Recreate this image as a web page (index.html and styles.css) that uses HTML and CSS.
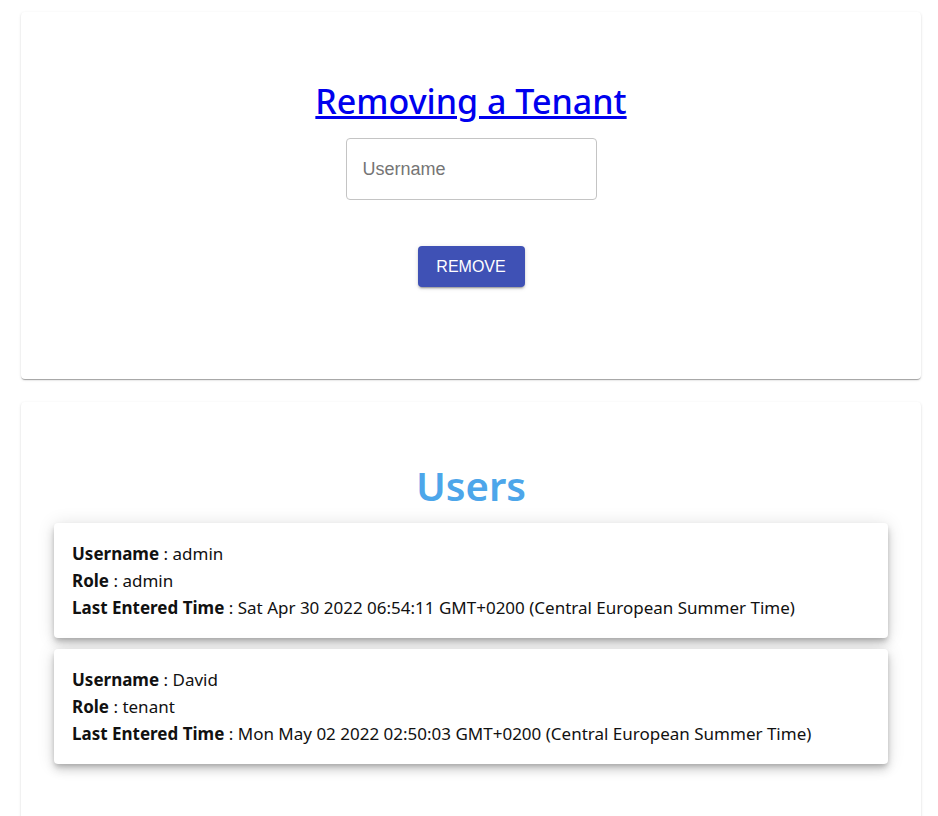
FILE: index.html
```html
<!DOCTYPE html>
<html>
<head>
<meta charset="utf-8">
<link rel="stylesheet" href="styles.css">
</head>
<body>
<div class="page">
  <section class="card remove-card">
    <h1 class="title"><a href="#">Removing a Tenant</a></h1>
    <div class="field"><input type="text" placeholder="Username"></div>
    <button class="btn">REMOVE</button>
  </section>
  <section class="card users-card">
    <h2 class="users-title">Users</h2>
    <div class="user">
      <div><b>Username</b> : admin</div>
      <div><b>Role</b> : admin</div>
      <div><b>Last Entered Time</b> : Sat Apr 30 2022 06:54:11 GMT+0200 (Central European Summer Time)</div>
    </div>
    <div class="user">
      <div><b>Username</b> : David</div>
      <div><b>Role</b> : tenant</div>
      <div><b>Last Entered Time</b> : Mon May 02 2022 02:50:03 GMT+0200 (Central European Summer Time)</div>
    </div>
  </section>
</div>
</body>
</html>
```
FILE: styles.css
```css
html, body { margin: 0; padding: 0; background: #fff; }
body { font-family: "Noto Sans", "Open Sans", sans-serif; color: #111; }
.page { width: 900px; margin-left: 21px; padding-top: 12px; display: flex; flex-direction: column; gap: 23px; }
.card { background: #fff; border-radius: 4px;
  box-shadow: 0 2px 1px -1px rgba(0,0,0,.2), 0 1px 1px 0 rgba(0,0,0,.14), 0 1px 3px 0 rgba(0,0,0,.12); }
.remove-card { height: 367px; display: flex; flex-direction: column; align-items: center; box-sizing: border-box; padding-top: 65px; }
.title { margin: 0; font-size: 34px; font-weight: 500; line-height: 48px; }
.title a { color: #0000ee; text-decoration: underline; }
.field { margin-top: 13px; }
.field input { width: 251px; height: 62px; box-sizing: border-box; border: 1px solid #c4c4c4; border-radius: 4px;
  padding: 0 16px; font-family: "Liberation Sans", Arial, sans-serif; font-size: 18px; color: #333; outline: none; }
.field input::placeholder { color: #757575; }
.btn { margin-top: 46px; width: 107px; height: 41px; border: 0; border-radius: 4px; background: #3f51b5; color: #fff;
  font-family: "Liberation Sans", Arial, sans-serif; font-size: 16px;
  box-shadow: 0 3px 1px -2px rgba(0,0,0,.2), 0 2px 2px 0 rgba(0,0,0,.14), 0 1px 5px 0 rgba(0,0,0,.12); }
.users-card { padding: 58px 33px 50px; display: flex; flex-direction: column; gap: 11px; min-height: 420px; box-sizing: border-box; }
.users-title { margin: 0; text-align: center; font-size: 40px; font-weight: 600; color: #4da6ea; line-height: 52px; }
.user { background: #fff; border-radius: 4px; padding: 17px 18px 17px; font-size: 17px; line-height: 27px;
  box-shadow: 0 3px 5px -1px rgba(0,0,0,.2), 0 6px 10px 0 rgba(0,0,0,.14), 0 1px 18px 0 rgba(0,0,0,.12); }
.user b { font-weight: 700; }
```
